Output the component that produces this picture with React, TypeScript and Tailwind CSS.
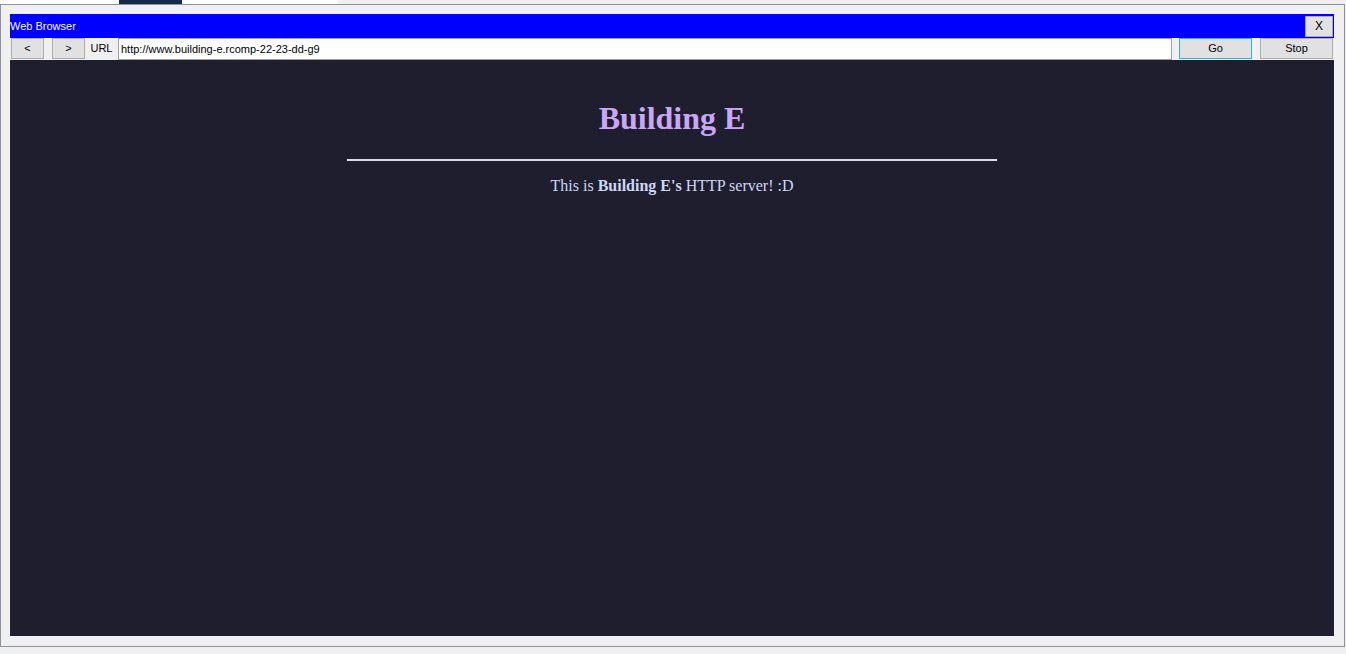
import React from 'react';

function ToolButton({ label, className = '', border = 'border-[#adadad]' }: { label: string; className?: string; border?: string }) {
  return (
    <button className={`h-[21px] bg-[#e1e1e1] border ${border} text-[11px] text-black flex items-center justify-center ${className}`}>
      {label}
    </button>
  );
}

export default function App() {
  return (
    <div className="h-[654px] w-[1346px] bg-[#f0f0f0] overflow-hidden font-['Liberation_Sans',Arial,sans-serif]">
      {/* strip of the host app above the window */}
      <div className="flex h-[4px]">
        <div className="w-[119px] bg-white" />
        <div className="w-[63px] bg-[#14294b]" />
        <div className="w-[156px] bg-white" />
      </div>

      <div className="w-[1345px] h-[643px] border border-[#8c939c] pt-[9px] pl-[9px]">
        <div className="w-[1324px] flex flex-col">
          {/* title bar */}
          <div className="h-[24px] bg-[#0000ff] border border-[#0000ff] flex items-center justify-between">
            <span className="text-[11px] text-white leading-none -ml-[1px]">Web Browser</span>
            <button className="w-[28px] h-[21px] bg-[#e1e1e1] border border-[#adadad] text-[12px] text-black flex items-center justify-center">
              X
            </button>
          </div>

          {/* toolbar */}
          <div className="h-[22px] flex items-start pl-[1px] pr-[1px]">
            <ToolButton label="<" className="w-[33px]" />
            <ToolButton label=">" className="w-[33px] ml-[8px]" />
            <span className="w-[33px] h-[21px] text-[11px] text-black flex items-center justify-center">URL</span>
            <div className="flex-1 h-[22px] bg-white border border-[#a0a0a0] text-[11px] text-black flex items-center px-[2px]">
              http://www.building-e.rcomp-22-23-dd-g9
            </div>
            <ToolButton label="Go" className="w-[73px] ml-[7px]" border="border-[#20b6e3]" />
            <ToolButton label="Stop" className="w-[73px] ml-[8px]" />
          </div>

          {/* page */}
          <div className="h-[576px] bg-[#1e1e2e] flex flex-col items-center pt-[40px] font-['Liberation_Serif','Times_New_Roman',serif]">
            <h1 className="text-[32px] leading-[37px] font-bold text-[#cba6f7]">Building E</h1>
            <hr className="w-[650px] mt-[22px] border-0 border-t-2 border-[#d9dce6]" />
            <p className="mt-[16px] text-[16px] leading-[18px] text-[#cdd6f4]">
              This is <b>Building E's</b> HTTP server! :D
            </p>
          </div>
        </div>
      </div>
    </div>
  );
}
